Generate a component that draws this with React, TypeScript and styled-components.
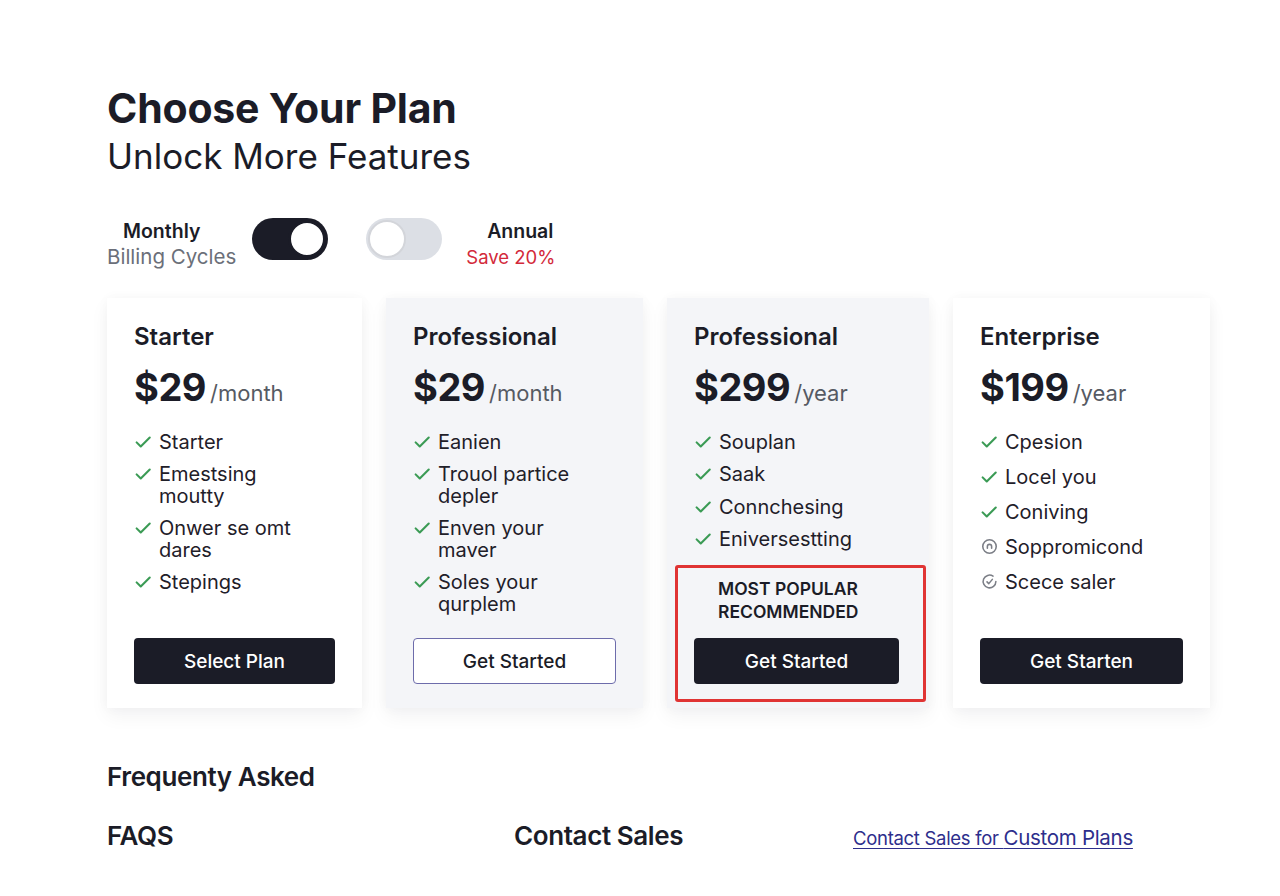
import React from 'react';
import styled, { createGlobalStyle } from 'styled-components';

const colors = {
  ink: '#1b1c27',
  text: '#1f2029',
  muted: '#6b6f79',
  price: '#565a63',
  green: '#3b9b55',
  red: '#d3293a',
  grayCard: '#f4f5f8',
  track: '#dcdfe5',
  outline: '#6d6cab',
  link: '#2d2e8c',
};

const GlobalStyle = createGlobalStyle`
  * { box-sizing: border-box; }
  body {
    margin: 0;
    background: #ffffff;
    font-family: Inter, "Noto Sans", "Liberation Sans", sans-serif;
    color: ${colors.text};
  }
`;

const Page = styled.main`
  width: 1280px;
  min-height: 896px;
  padding: 84px 70px 0 107px;
`;

const Title = styled.h1`
  margin: 0;
  font-size: 41px;
  line-height: 48px;
  font-weight: 700;
  letter-spacing: -0.2px;
  color: ${colors.ink};
`;

const Subtitle = styled.h2`
  margin: 3px 0 0;
  font-size: 35px;
  line-height: 42px;
  font-weight: 400;
  color: ${colors.ink};
`;

const BillingRow = styled.div`
  display: flex;
  align-items: center;
  margin-top: 41px;
  height: 42px;
`;

const LabelGroup = styled.div<{ $align: 'left' | 'right' }>`
  display: flex;
  flex-direction: column;
  align-items: ${p => (p.$align === 'right' ? 'flex-end' : 'flex-start')};
  margin: ${p => (p.$align === 'right' ? '10px 0 0 24px' : '10px 16px 0 0')};
`;

const LabelStrong = styled.span<{ $indent?: number }>`
  font-size: 19.5px;
  font-weight: 600;
  line-height: 25px;
  color: ${colors.ink};
  margin-left: ${p => p.$indent ?? 0}px;
  margin-right: 2px;
`;

const LabelSub = styled.span<{ $tone: 'muted' | 'red' }>`
  font-size: ${p => (p.$tone === 'red' ? '18.5px' : '20.5px')};
  line-height: 26px;
  color: ${p => (p.$tone === 'red' ? colors.red : colors.muted)};
`;

const Track = styled.span<{ $on: boolean }>`
  display: flex;
  align-items: center;
  justify-content: ${p => (p.$on ? 'flex-end' : 'flex-start')};
  width: 76px;
  height: 42px;
  padding: 2px;
  border-radius: 21px;
  background: ${p => (p.$on ? colors.ink : colors.track)};
  & + & {
    margin-left: 38px;
  }
`;

const Knob = styled.span<{ $on: boolean }>`
  width: 38px;
  height: 38px;
  border-radius: 50%;
  background: #ffffff;
  border: ${p => (p.$on ? `3px solid ${colors.ink}` : '2px solid #d3d5da')};
`;

const PlanGrid = styled.section`
  display: grid;
  grid-template-columns: 255px 257px 262px 257px;
  justify-content: space-between;
  margin-top: 38px;
  width: 1103px;
`;

const Card = styled.article<{ $tint: boolean }>`
  display: flex;
  flex-direction: column;
  height: 410px;
  padding: 25px 27px 24px;
  background: ${p => (p.$tint ? colors.grayCard : '#ffffff')};
  box-shadow: 0 8px 18px rgba(20, 24, 40, 0.05), 0 0 12px rgba(20, 24, 40, 0.03);
`;

const PlanName = styled.h3`
  margin: 0;
  font-size: 24px;
  line-height: 1.2;
  font-weight: 600;
  color: ${colors.ink};
`;

const PriceRow = styled.div`
  display: flex;
  align-items: baseline;
  margin-top: 13px;
  line-height: 44px;
`;

const Amount = styled.span`
  font-size: 38px;
  font-weight: 700;
  letter-spacing: -0.5px;
  color: ${colors.ink};
`;

const Period = styled.span`
  margin-left: 4px;
  font-size: 22px;
  font-weight: 400;
  color: ${colors.price};
`;

const FeatureList = styled.ul<{ $gap: number }>`
  list-style: none;
  margin: 16px 0 0;
  padding: 0;
  display: flex;
  flex-direction: column;
  gap: ${p => p.$gap}px;
`;

const Feature = styled.li`
  display: flex;
  align-items: flex-start;
  gap: 7px;
  font-size: 20px;
  line-height: 22px;
  color: ${colors.text};
  white-space: pre-line;
`;

const IconBox = styled.span`
  flex: none;
  display: flex;
  align-items: center;
  justify-content: center;
  width: 18px;
  height: 22px;
`;

const Spacer = styled.div`
  flex: 1;
`;

const PlanButton = styled.button<{ $variant: 'solid' | 'outline' }>`
  width: 100%;
  height: 46px;
  border-radius: 4px;
  font-family: inherit;
  font-size: 19px;
  font-weight: 500;
  cursor: pointer;
  background: ${p => (p.$variant === 'solid' ? colors.ink : '#ffffff')};
  color: ${p => (p.$variant === 'solid' ? '#ffffff' : colors.ink)};
  border: ${p => (p.$variant === 'solid' ? 'none' : `1.5px solid ${colors.outline}`)};
`;

const Highlight = styled.div`
  margin: 0 -24px -18px -19px;
  padding: 9px 24px 15px 16px;
  border: 3px solid #e03434;
  border-radius: 3px;
`;

const PopularLabel = styled.div`
  padding-left: 24px;
  margin-bottom: 15px;
  font-size: 17.5px;
  line-height: 23px;
  font-weight: 600;
  color: ${colors.ink};
  text-transform: uppercase;
`;

const HelpSection = styled.section`
  margin-top: 54px;
`;

const SectionTitle = styled.h4`
  margin: 0;
  font-size: 26px;
  line-height: 30px;
  font-weight: 600;
  letter-spacing: -0.4px;
  color: ${colors.ink};
`;

const HelpRow = styled.div`
  display: grid;
  grid-template-columns: 407px 339px auto;
  align-items: baseline;
  margin-top: 29px;
`;

const SalesLink = styled.a`
  font-size: 18.5px;
  color: ${colors.link};
  text-decoration: underline;
  text-underline-offset: 3px;
  letter-spacing: -0.3px;
`;

const LinkEmphasis = styled.span`
  font-size: 20.5px;
`;

type IconKind = 'check' | 'gauge' | 'circle-check';

const FeatureIcon: React.FC<{ kind: IconKind }> = ({ kind }) => {
  if (kind === 'gauge') {
    return (
      <svg width="17" height="17" viewBox="0 0 24 24" fill="none" stroke="#7b7e86" strokeWidth="2.2" strokeLinecap="round">
        <circle cx="12" cy="12" r="9.5" />
        <path d="M9 14.5v-2.5a3 3 0 0 1 6 0v2.5" />
      </svg>
    );
  }
  if (kind === 'circle-check') {
    return (
      <svg width="17" height="17" viewBox="0 0 24 24" fill="none" stroke="#7b7e86" strokeWidth="2.2" strokeLinecap="round" strokeLinejoin="round">
        <path d="M21 12a9 9 0 1 1-4-7.5" />
        <path d="M8.5 12.5l2.5 2.5 5-6" />
      </svg>
    );
  }
  return (
    <svg width="18" height="18" viewBox="0 0 24 24" fill="none" stroke={colors.green} strokeWidth="2.8" strokeLinecap="round" strokeLinejoin="round">
      <path d="M3.5 12.5l5.5 5.5L21 6" />
    </svg>
  );
};

interface Plan {
  name: string;
  amount: string;
  period: string;
  tint: boolean;
  gap: number;
  features: { text: string; icon: IconKind }[];
  cta: string;
  variant: 'solid' | 'outline';
  popular?: boolean;
}

const check = (text: string) => ({ text, icon: 'check' as IconKind });

const plans: Plan[] = [
  {
    name: 'Starter',
    amount: '$29',
    period: 'month',
    tint: false,
    gap: 10,
    features: [check('Starter'), check('Emestsing\nmoutty'), check('Onwer se omt\ndares'), check('Stepings')],
    cta: 'Select Plan',
    variant: 'solid',
  },
  {
    name: 'Professional',
    amount: '$29',
    period: 'month',
    tint: true,
    gap: 10,
    features: [check('Eanien'), check('Trouol partice\ndepler'), check('Enven your\nmaver'), check('Soles your\nqurplem')],
    cta: 'Get Started',
    variant: 'outline',
  },
  {
    name: 'Professional',
    amount: '$299',
    period: 'year',
    tint: true,
    gap: 10.5,
    features: [check('Souplan'), check('Saak'), check('Connchesing'), check('Eniversestting')],
    cta: 'Get Started',
    variant: 'solid',
    popular: true,
  },
  {
    name: 'Enterprise',
    amount: '$199',
    period: 'year',
    tint: false,
    gap: 13,
    features: [
      check('Cpesion'),
      check('Locel you'),
      check('Coniving'),
      { text: 'Soppromicond', icon: 'gauge' },
      { text: 'Scece saler', icon: 'circle-check' },
    ],
    cta: 'Get Starten',
    variant: 'solid',
  },
];

const PlanCard: React.FC<{ plan: Plan }> = ({ plan }) => (
  <Card $tint={plan.tint}>
    <PlanName>{plan.name}</PlanName>
    <PriceRow>
      <Amount>{plan.amount}</Amount>
      <Period>/{plan.period}</Period>
    </PriceRow>
    <FeatureList $gap={plan.gap}>
      {plan.features.map((f, i) => (
        <Feature key={i}>
          <IconBox>
            <FeatureIcon kind={f.icon} />
          </IconBox>
          {f.text}
        </Feature>
      ))}
    </FeatureList>
    <Spacer />
    {plan.popular ? (
      <Highlight>
        <PopularLabel>
          Most Popular
          <br />
          Recommended
        </PopularLabel>
        <PlanButton $variant={plan.variant}>{plan.cta}</PlanButton>
      </Highlight>
    ) : (
      <PlanButton $variant={plan.variant}>{plan.cta}</PlanButton>
    )}
  </Card>
);

export default function App() {
  return (
    <>
      <GlobalStyle />
      <Page>
        <Title>Choose Your Plan</Title>
        <Subtitle>Unlock More Features</Subtitle>

        {/* Billing cycle switch */}
        <BillingRow>
          <LabelGroup $align="left">
            <LabelStrong $indent={16}>Monthly</LabelStrong>
            <LabelSub $tone="muted">Billing Cycles</LabelSub>
          </LabelGroup>
          <Track $on>
            <Knob $on />
          </Track>
          <Track $on={false}>
            <Knob $on={false} />
          </Track>
          <LabelGroup $align="right">
            <LabelStrong>Annual</LabelStrong>
            <LabelSub $tone="red">Save 20%</LabelSub>
          </LabelGroup>
        </BillingRow>

        <PlanGrid>
          {plans.map((plan, i) => (
            <PlanCard key={i} plan={plan} />
          ))}
        </PlanGrid>

        <HelpSection>
          <SectionTitle>Frequenty Asked</SectionTitle>
          <HelpRow>
            <SectionTitle>FAQS</SectionTitle>
            <SectionTitle>Contact Sales</SectionTitle>
            <SalesLink href="#">
              Contact Sales for <LinkEmphasis>Custom Plans</LinkEmphasis>
            </SalesLink>
          </HelpRow>
        </HelpSection>
      </Page>
    </>
  );
}
